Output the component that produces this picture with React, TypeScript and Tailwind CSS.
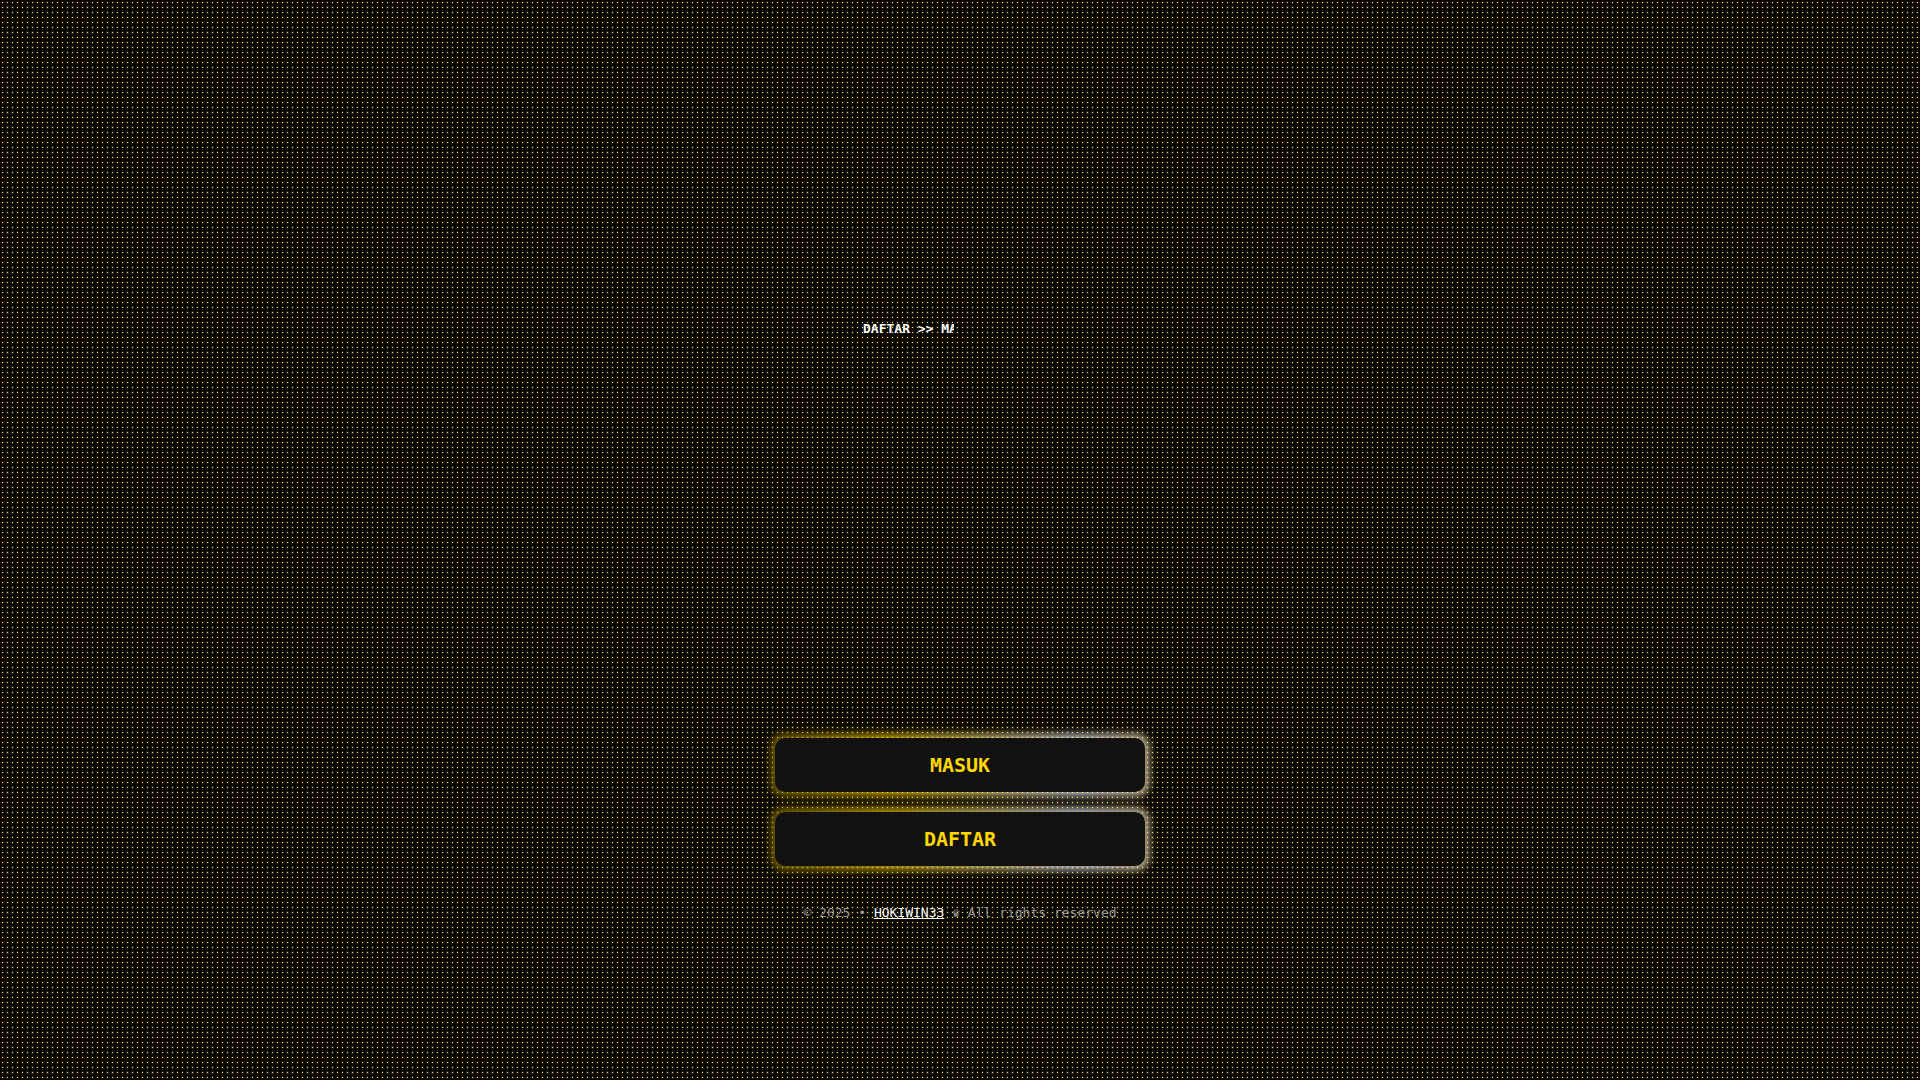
const links = [
  { label: 'MASUK', href: '#masuk' },
  { label: 'DAFTAR', href: '#daftar' },
];

function GlowButton({ label, href }: { label: string; href: string }) {
  return (
    <a
      href={href}
      className="relative flex h-[54px] items-center justify-center text-xl font-bold text-[#ffd700]"
    >
      <span className="absolute -inset-1 rounded-xl bg-[linear-gradient(90deg,#8f7900,#f8cf00_30%,#f4f4fa_80%,#fbe8bc)] opacity-75 blur-[4px]" />
      <span className="absolute inset-0 rounded-[10px] bg-[#111111]" />
      <span className="relative">{label}</span>
    </a>
  );
}

function App() {
  return (
    <div className="flex min-h-screen flex-col items-center bg-black bg-[radial-gradient(circle,#ffdc70_0px,#ffdc70_0.5px,#221a08_1px,#0a0802_2px,#000000_3px)] bg-size-[5px_5px] font-['DejaVu_Sans_Mono',monospace]">
      <main className="flex w-full max-w-[370px] flex-col pt-[319px]">
        <div className="ml-[88px] w-[91px] overflow-hidden text-[13px] leading-5 font-bold whitespace-nowrap text-white">
          DAFTAR &gt;&gt; MASUK
        </div>
        <nav className="mt-[399px] flex flex-col gap-5">
          {links.map((link) => (
            <GlowButton key={link.label} {...link} />
          ))}
        </nav>
        <footer className="mt-[37px] text-center text-[13px] leading-5 whitespace-nowrap text-[#999999]">
          © 2025 •{' '}
          <a href="#home" className="text-white underline">
            HOKIWIN33
          </a>{' '}
          ♛ All rights reserved
        </footer>
      </main>
    </div>
  );
}

export default App;
